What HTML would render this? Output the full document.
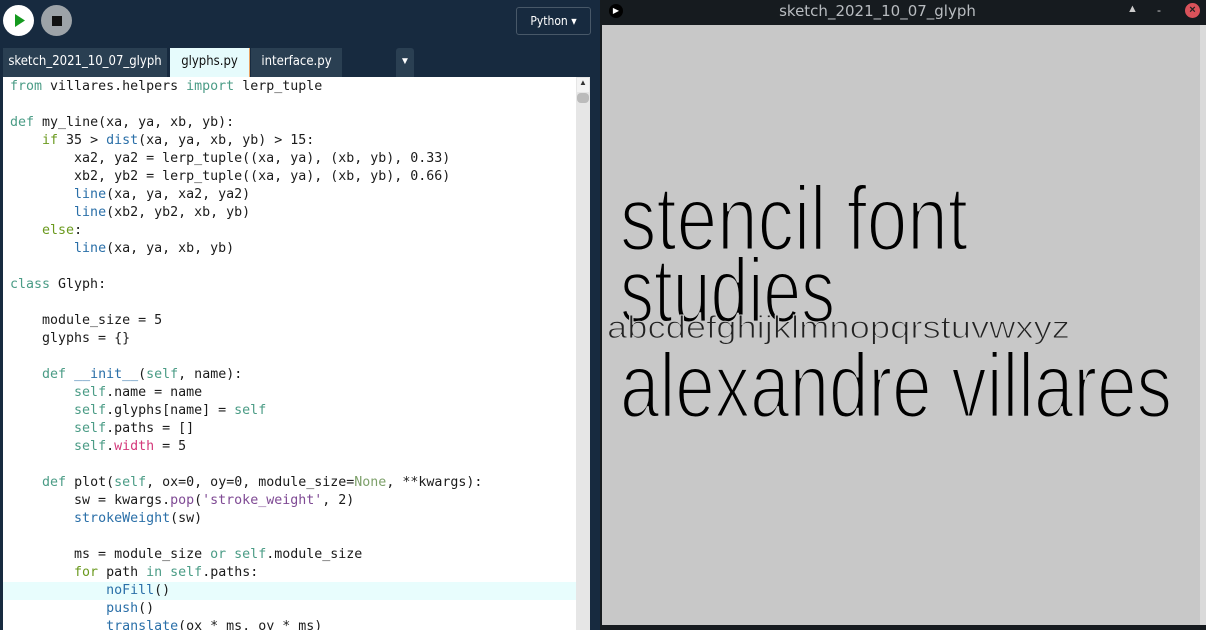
<!DOCTYPE html>
<html><head><meta charset="utf-8"><style>
*{margin:0;padding:0;box-sizing:border-box}
body{width:1206px;height:630px;overflow:hidden;background:#172a3f;position:relative;font-family:"Liberation Sans",sans-serif}
.abs{position:absolute}
.code{position:absolute;left:3px;top:77px;width:573px;height:553px;background:#fff;overflow:hidden}
.code pre{font-family:"DejaVu Sans Mono","Liberation Mono",monospace;font-size:13.3px;line-height:18px;color:#1b1b1b;padding-left:7px;padding-top:1px}
.k{color:#4b9c86}.c{color:#6b9a1f}.f{color:#2a6fa8}.s{color:#7f4a94}.n{color:#7da06a}.p{color:#d4387a}
.hl{position:absolute;left:0;top:505px;width:573px;height:18px;background:#e8fdfd}
.tab{position:absolute;top:48px;height:29px;color:#fff;font-family:"DejaVu Sans Condensed","DejaVu Sans",sans-serif;font-size:13px;line-height:27px;text-align:center;white-space:nowrap;overflow:hidden}
</style></head><body>
<div class="abs" style="left:3px;top:5px;width:31px;height:31px;border-radius:50%;background:#fff"></div>
<svg class="abs" style="left:3px;top:5px" width="31" height="31"><polygon points="12,9 12,22 22,15.5" fill="#159a1f"/></svg>
<div class="abs" style="left:41px;top:5px;width:31px;height:31px;border-radius:50%;background:#9da3a8"></div>
<div class="abs" style="left:52px;top:16px;width:10px;height:10px;background:#111"></div>
<div class="abs" style="left:516px;top:7px;width:75px;height:28px;border:1px solid #485868;border-radius:3px;color:#fff;font-family:'DejaVu Sans Condensed',sans-serif;font-size:12px;line-height:26px;text-align:center">Python ▾</div>
<div class="tab" style="left:3px;width:164px;background:#2a3f52">sketch_2021_10_07_glyph</div>
<div class="tab" style="left:170px;width:80px;background:#e6fbfc;color:#111;border-right:1px solid #e8a060">glyphs.py</div>
<div class="tab" style="left:251px;width:91px;background:#2a3f52">interface.py</div>
<div class="abs" style="left:396px;top:48px;width:18px;height:29px;background:#2a3f52;color:#fff;font-size:10px;line-height:27px;text-align:center;border-radius:3px 3px 0 0">▼</div>
<div class="code"><div class="hl"></div><pre style="position:relative"><span class="k">from</span> villares.helpers <span class="k">import</span> lerp_tuple

<span class="k">def</span> my_line(xa, ya, xb, yb):
    <span class="c">if</span> 35 &gt; <span class="f">dist</span>(xa, ya, xb, yb) &gt; 15:
        xa2, ya2 = lerp_tuple((xa, ya), (xb, yb), 0.33)
        xb2, yb2 = lerp_tuple((xa, ya), (xb, yb), 0.66)
        <span class="f">line</span>(xa, ya, xa2, ya2)
        <span class="f">line</span>(xb2, yb2, xb, yb)
    <span class="c">else</span>:
        <span class="f">line</span>(xa, ya, xb, yb)

<span class="k">class</span> Glyph:

    module_size = 5
    glyphs = {}

    <span class="k">def</span> <span class="f">__init__</span>(<span class="k">self</span>, name):
        <span class="k">self</span>.name = name
        <span class="k">self</span>.glyphs[name] = <span class="k">self</span>
        <span class="k">self</span>.paths = []
        <span class="k">self</span>.<span class="p">width</span> = 5

    <span class="k">def</span> plot(<span class="k">self</span>, ox=0, oy=0, module_size=<span class="n">None</span>, **kwargs):
        sw = kwargs.<span class="s">pop</span>(<span class="s">'stroke_weight'</span>, 2)
        <span class="f">strokeWeight</span>(sw)

        ms = module_size <span class="k">or</span> <span class="k">self</span>.module_size
        <span class="c">for</span> path <span class="k">in</span> <span class="k">self</span>.paths:
            <span class="f">noFill</span>()
            <span class="f">push</span>()
            <span class="f">translate</span>(ox * ms, oy * ms)</pre></div>
<div class="abs" style="left:576px;top:77px;width:14px;height:553px;background:#e6e6e6"></div>
<div class="abs" style="left:577px;top:78px;width:12px;height:14px;background:#f4f4f4;font-size:8px;text-align:center;color:#333">▲</div>
<div class="abs" style="left:577px;top:93px;width:12px;height:10px;background:#bbb;border-radius:4px"></div>
<div class="abs" style="left:600px;top:0;width:606px;height:630px;background:#161b1f"></div>
<div class="abs" style="left:609px;top:4px;width:14px;height:14px;border-radius:50%;background:#000;color:#fff;font-size:8px;line-height:14px;text-align:center">▶</div>
<div class="abs" style="left:600px;top:2px;width:555px;text-align:center;color:#b8bcc0;font-family:'DejaVu Sans',sans-serif;font-size:15px">sketch_2021_10_07_glyph</div>
<div class="abs" style="left:1127px;top:3px;color:#ccc;font-size:11px">▲</div>
<div class="abs" style="left:1157px;top:3px;color:#ccc;font-size:12px">-</div>
<div class="abs" style="left:1185px;top:3px;width:15px;height:15px;border-radius:50%;background:#d9525a;color:#222;font-size:11px;line-height:15px;text-align:center;font-weight:bold">×</div>
<div class="abs" style="left:602px;top:25px;width:598px;height:600px;background:#c8c8c8"></div>
<div class="abs" style="left:1200px;top:25px;width:6px;height:600px;background:#dadada"></div>
<svg class="abs" style="left:0;top:0" width="1206" height="630">
<g font-family="'Liberation Sans',sans-serif" fill="#000" stroke="#c8c8c8" stroke-width="2.2">
<text transform="translate(620,250) scale(1,1.35)" x="0" y="0" font-size="68" textLength="348" lengthAdjust="spacingAndGlyphs">stencil font</text>
<text transform="translate(620,322) scale(1,1.35)" x="0" y="0" font-size="68" textLength="215" lengthAdjust="spacingAndGlyphs">studies</text>
<text transform="translate(620,417) scale(1,1.35)" x="0" y="0" font-size="68" textLength="552" lengthAdjust="spacingAndGlyphs">alexandre villares</text>
</g>
<text transform="translate(607,338) scale(1,1.2)" x="0" y="0" font-family="'Liberation Sans',sans-serif" font-size="26" fill="#222" stroke="#c8c8c8" stroke-width="0.9" textLength="463" lengthAdjust="spacingAndGlyphs">abcdefghijklmnopqrstuvwxyz</text>
</svg>
</body></html>
